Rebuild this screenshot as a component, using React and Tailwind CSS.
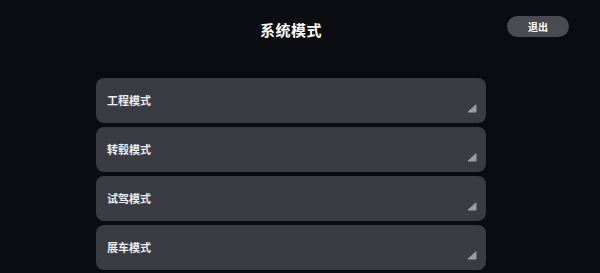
import React from "react";

const modes = ["工程模式", "转毂模式", "试驾模式", "展车模式"];

function Corner() {
    return (
        <svg className="w-[10px] h-[9px]" viewBox="0 0 10 9">
            <path d="M9 0.8 L9 8 L1 8 Z" fill="#9c9ca4" stroke="#9c9ca4" strokeWidth="1" strokeLinejoin="round" />
        </svg>
    );
}

export default function App() {
    return (
        <div
            className="w-[600px] h-[273px] bg-[#0b0c11] overflow-hidden text-white"
            style={{ fontFamily: '"Noto Sans CJK SC", "Noto Sans", sans-serif' }}
        >
            {/* header */}
            <div className="flex items-start">
                <div className="w-[96px] shrink-0"></div>
                <div className="w-[390px] shrink-0 flex justify-center pt-[19px]">
                    <h1 className="text-[15px] leading-[22px] font-bold tracking-[0.5px]">系统模式</h1>
                </div>
                <button className="ml-[21px] mt-[16px] w-[62px] h-[21px] rounded-full bg-[#4a4b52] text-[10px] font-bold leading-none flex items-center justify-center">
                    退出
                </button>
            </div>

            {/* mode list */}
            <div className="ml-[96px] w-[390px] mt-[37px] flex flex-col gap-[4px]">
                {modes.map((m) => (
                    <div key={m} className="relative h-[45px] rounded-[8px] bg-[#3a3b43] flex items-center pl-[11px]">
                        <span className="text-[11px] font-bold text-[#eceef2]">{m}</span>
                        <div className="absolute right-[9px] bottom-[10px]">
                            <Corner />
                        </div>
                    </div>
                ))}
            </div>
        </div>
    );
}
